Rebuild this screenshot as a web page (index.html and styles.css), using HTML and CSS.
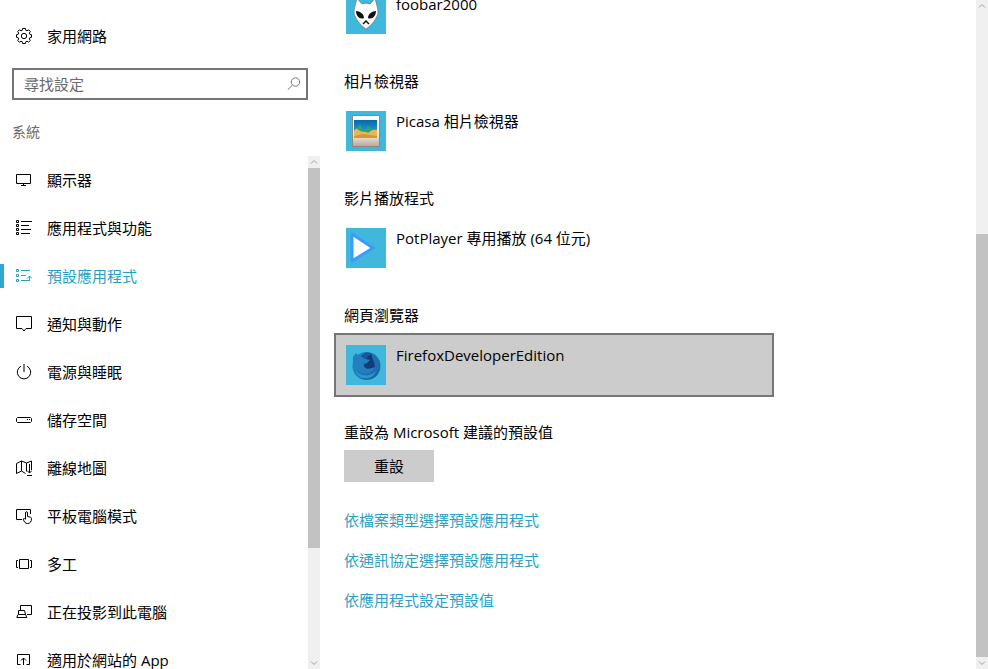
FILE: index.html
```html
<!DOCTYPE html>
<html lang="zh-Hant">
	<head>
		<meta charset="utf-8">
		<title>設定</title>
		<link rel="stylesheet" href="styles.css">
	</head>
	<body>
		<aside class="sidebar">
			<a href="#" class="item home">
				<svg class="icon" viewBox="0 0 16 16"><path d="M6.600 .5h2.800l.4 1.800 1.200.5 1.600-1 1.700 1.700-1 1.600.5 1.200 1.700.4v2.600l-1.700.4-.5 1.200 1 1.600-1.700 1.700-1.600-1-1.200.5-.4 1.800H6.600l-.4-1.800-1.200-.5-1.600 1-1.700-1.700 1-1.600-.5-1.200L.5 9.300V6.700l1.700-.4.5-1.200-1-1.600 1.700-1.700 1.600 1 1.200-.5z"/><circle cx="8" cy="8" r="2.700"/></svg>
				<span>家用網路</span>
			</a>
			<div class="search">
				<input type="text" id="search" placeholder="尋找設定" aria-label="尋找設定">
				<svg class="icon" viewBox="0 0 16 16"><circle cx="9.500" cy="6" r="4.200"/><path d="M6.500 9L1.800 13.700"/></svg>
			</div>
			<h2 class="group">系統</h2>
			<div class="list">
				<nav class="nav">
					<a href="#" class="item">
						<svg class="icon" viewBox="0 0 16 16"><path d="M.5 2.500h14v9H.5zM7.500 11.500v2M5 13.500h5"/></svg>
						<span>顯示器</span>
					</a>
					<a href="#" class="item">
						<svg class="icon" viewBox="0 0 16 16"><path d="M.5 .5h2v2h-2zM.5 4.500h2v2h-2zM.5 8.500h2v2h-2zM.5 12.500h2v2h-2zM5 1.500h11M5 5.500h8M5 9.500h10M5 13.500h9"/></svg>
						<span>應用程式與功能</span>
					</a>
					<a href="#" class="item active">
						<svg class="icon" viewBox="0 0 16 16"><path d="M.5 1.500h2v2h-2zM.5 6.500h2v2h-2zM.5 11.500h2v2h-2zM5 2.500h9M5 7.500h5M5 12.500h9M13.500 13V8M11 10.500L13.500 8l2.500 2.500"/></svg>
						<span>預設應用程式</span>
					</a>
					<a href="#" class="item">
						<svg class="icon" viewBox="0 0 16 16"><path d="M.5 .5h15v12H10l-2 2.500-2-2.500H.5z"/></svg>
						<span>通知與動作</span>
					</a>
					<a href="#" class="item">
						<svg class="icon" viewBox="0 0 16 16"><path d="M8 0v8M5 2.200a6.700 6.700 0 1 0 6 0"/></svg>
						<span>電源與睡眠</span>
					</a>
					<a href="#" class="item">
						<svg class="icon" viewBox="0 0 16 16"><path d="M1.500 5.500h13l1 1v3l-1 1h-13l-1-1v-3zM11 7.500h1M13 7.500h1"/></svg>
						<span>儲存空間</span>
					</a>
					<a href="#" class="item">
						<svg class="icon" viewBox="0 0 16 16"><path d="M10.500 11.500V3L5.500 1 .5 3.500v10l5-2.500 4 2.500M5.500 1v10M10.500 3l5-2v9M13.500 4v9M11 10.500l2.500 2.500 2.500-2.500M11 15.500h5"/></svg>
						<span>離線地圖</span>
					</a>
					<a href="#" class="item">
						<svg class="icon" viewBox="0 0 16 16"><path d="M6 11.500H.5v-10h14V6M9.500 11V5c0-1.800 2-1.800 2 0v3.500l3 .7c.7.2 1 .6 1 1.300 0 3-1.200 5-4 5-2.300 0-3.300-1.500-4.300-4.500.8-.8 1.600-.5 2.300.5"/></svg>
						<span>平板電腦模式</span>
					</a>
					<a href="#" class="item">
						<svg class="icon" viewBox="0 0 16 16"><path d="M3.500 3.500h9v9h-9zM2 4.500H.5v7H2M14 4.500h1.500v7H14"/></svg>
						<span>多工</span>
					</a>
					<a href="#" class="item">
						<svg class="icon" viewBox="0 0 16 16"><path d="M4.500 6V1.500h11v9H11M2.500 6.500h6l1 4H2.500zM2 10.500L.8 13.500h10l-1.300-3"/></svg>
						<span>正在投影到此電腦</span>
					</a>
					<a href="#" class="item">
						<svg class="icon" viewBox="0 0 16 16"><path d="M4.500 12.500h-3v-10h12v10h-3M7.500 13V6M5 8.500L7.500 6 10 8.500"/></svg>
						<span>適用於網站的 App</span>
					</a>
				</nav>
				<div class="scrollbar" aria-hidden="true">
					<svg class="arrow" viewBox="0 0 12 12"><path d="M3 7.500l3-3 3 3"/></svg>
					<div class="track">
						<div class="thumb nav-thumb"></div>
					</div>
					<svg class="arrow" viewBox="0 0 12 12"><path d="M3 4.500l3 3 3-3"/></svg>
				</div>
			</div>
		</aside>
		<main class="content">
			<button class="app">
				<svg class="tile" viewBox="0 0 40 40">
					<path d="M11 4c2 3 4 5 5 6 3-1 5-1 8 0 1-1 3-3 5-6 1 5 3 10 3 15-1 5-6 12-12 16C14 31 9 24 8 19c0-5 2-10 3-15z" fill="#fff" stroke="#666" stroke-width=".6"/>
					<path d="M10 17c4 0 8 3 8 7-4 2-8-2-8-7zM30 17c-4 0-8 3-8 7 4 2 8-2 8-7z" fill="#111"/>
					<path d="M17 30l3-3 3 3" fill="none" stroke="#111" stroke-width="1.500"/>
				</svg>
				<span>foobar2000</span>
			</button>

			<h3 class="title">相片檢視器</h3>
			<button class="app">
				<svg class="tile" viewBox="0 0 40 40">
					<defs>
						<linearGradient id="sky" x2="0" y2="1"><stop offset="0" stop-color="#0868aa"/><stop offset="1" stop-color="#31b6df"/></linearGradient>
						<linearGradient id="frame" x2="0" y2="1"><stop offset="0" stop-color="#fff"/><stop offset=".65" stop-color="#eee6df"/><stop offset="1" stop-color="#baa795"/></linearGradient>
					</defs>
					<path d="M6.500 4.500h27v31h-27z" fill="url(#frame)" stroke="#8c887e"/>
					<path d="M8 9h23v18H8z" fill="url(#sky)"/>
					<path d="M8 20c3-4 6-3 9 0 4 3 7-2 14-1v8H8z" fill="#e9b654"/>
					<path d="M11 18l3-5 4 8-4-1zM19 20l3-5 4 4-4 3z" fill="#27a775"/>
					<path d="M8 25l9-2 14 2v2H8z" fill="#d69731"/>
				</svg>
				<span>Picasa 相片檢視器</span>
			</button>

			<h3 class="title">影片播放程式</h3>
			<button class="app">
				<svg class="tile" viewBox="0 0 40 40">
					<path d="M6 6l21 14L6 33z" fill="#fff" stroke="#399cff" stroke-width="3" stroke-linejoin="round"/>
				</svg>
				<span>PotPlayer 專用播放 (64 位元)</span>
			</button>

			<h3 class="title">網頁瀏覽器</h3>
			<button class="app selected">
				<svg class="tile" viewBox="0 0 40 40">
					<defs>
						<linearGradient id="fox" x2="1" y2="1"><stop offset="0" stop-color="#1f86c7"/><stop offset=".6" stop-color="#1879bd"/><stop offset="1" stop-color="#135790"/></linearGradient>
					</defs>
					<circle cx="20.500" cy="21" r="14" fill="url(#fox)"/>
					<circle cx="22" cy="17" r="9" fill="#123c79"/>
					<path d="M7 12l3-4 3 4c3-1 6 0 7 2l4 1-3 3-3 1c-1 4 4 6 8 4l3-1c-2 5-7 7-12 6C10 27 6 20 7 12z" fill="#2380bf"/>
					<path d="M25 8c6 2 9 8 8 14-1 5-4 8-8 10 4-5 5-12 2-17z" fill="#1c6eaf"/>
					<path d="M17 9c2-2 6-2 9 0l-4 2-2 3-3-1z" fill="#1d579b"/>
					<path d="M8 22c2 6 8 10 15 8 3-1 5-2 7-4-2 6-7 8-12 7-5 0-9-5-10-11z" fill="#2f94cc"/>
				</svg>
				<span>FirefoxDeveloperEdition</span>
			</button>

			<h3 class="title">重設為 Microsoft 建議的預設值</h3>
			<button class="reset">重設</button>

			<div class="links">
				<a href="#">依檔案類型選擇預設應用程式</a>
				<a href="#">依通訊協定選擇預設應用程式</a>
				<a href="#">依應用程式設定預設值</a>
			</div>
		</main>
		<div class="scrollbar" aria-hidden="true">
			<svg class="arrow" viewBox="0 0 12 12"><path d="M3 7.500l3-3 3 3"/></svg>
			<div class="track track-end">
				<div class="thumb page-thumb"></div>
			</div>
			<svg class="arrow" viewBox="0 0 12 12"><path d="M3 4.500l3 3 3-3"/></svg>
		</div>
	</body>
</html>
```

FILE: styles.css
```css
* { box-sizing: border-box; }
html, body { margin: 0; padding: 0; height: 100%; }
body {
	display: flex;
	overflow: hidden;
	background-color: #FFF;
	color: #000;
	font: 400 15px/24px "Open Sans", "Noto Sans CJK TC", sans-serif;
}
a { text-decoration: none; }
button, input { font: inherit; color: inherit; }

/* left column */
.sidebar {
	display: flex;
	flex-direction: column;
	flex: 0 0 320px;
	padding-top: 12px;
}
.item {
	display: flex;
	align-items: center;
	gap: 15px;
	height: 48px;
	flex: none;
	padding-left: 16px;
	color: #000;
}
.item.active {
	color: #2A9FC4;
	background: linear-gradient(#2BA8CC, #2BA8CC) left center / 4px 24px no-repeat;
}
.icon {
	width: 16px;
	height: 16px;
	flex: none;
	fill: none;
	stroke: currentColor;
	stroke-width: 1;
}
.search {
	display: flex;
	align-items: center;
	height: 32px;
	margin: 8px 12px 0;
	padding: 0 4px 0 10px;
	border: 2px solid #767676;
	color: #767676;
}
.search input {
	flex: 1;
	min-width: 0;
	padding: 0;
	border: 0;
	outline: 0;
	background: none;
}
.search input::placeholder { color: #6A6A6A; opacity: 1; }
.group {
	margin: 20px 12px 12px;
	color: #6A6A6A;
	font-size: 14px;
	font-weight: 400;
}
.list { display: flex; flex: 1; min-height: 0; }
.nav { flex: 1; overflow: hidden; }

/* scrollbars */
.scrollbar {
	display: flex;
	flex-direction: column;
	flex: 0 0 12px;
	background-color: #F0F0F0;
}
.arrow {
	width: 12px;
	height: 12px;
	flex: none;
	fill: none;
	stroke: #A0A0A0;
}
.track { display: flex; flex-direction: column; flex: 1; }
.track-end { justify-content: flex-end; }
.thumb { background-color: #C2C2C2; }
.nav-thumb { height: 77.7%; }
.page-thumb { height: 65.6%; }

/* right column, scrolled near its end */
.content {
	flex: 1;
	min-width: 0;
	margin-top: -18px;
	padding: 0 14px;
}
.app {
	display: flex;
	align-items: flex-start;
	gap: 10px;
	width: 100%;
	max-width: 440px;
	height: 64px;
	padding: 10px;
	border: 2px solid transparent;
	background: none;
	line-height: 20px;
	text-align: left;
}
.app.selected { background-color: #CCC; border-color: #767676; }
.tile { width: 40px; height: 40px; flex: none; background-color: #3FB8DC; }
.title {
	margin: 23px 10px 6px;
	font-size: 15px;
	font-weight: 400;
}
.reset {
	display: block;
	width: 90px;
	height: 32px;
	margin: 0 10px;
	padding: 0;
	border: 0;
	background-color: #CCC;
}
.links {
	display: flex;
	flex-direction: column;
	align-items: flex-start;
	gap: 16px;
	margin: 26px 10px;
}
.links a { color: #2A9FC4; }
```
